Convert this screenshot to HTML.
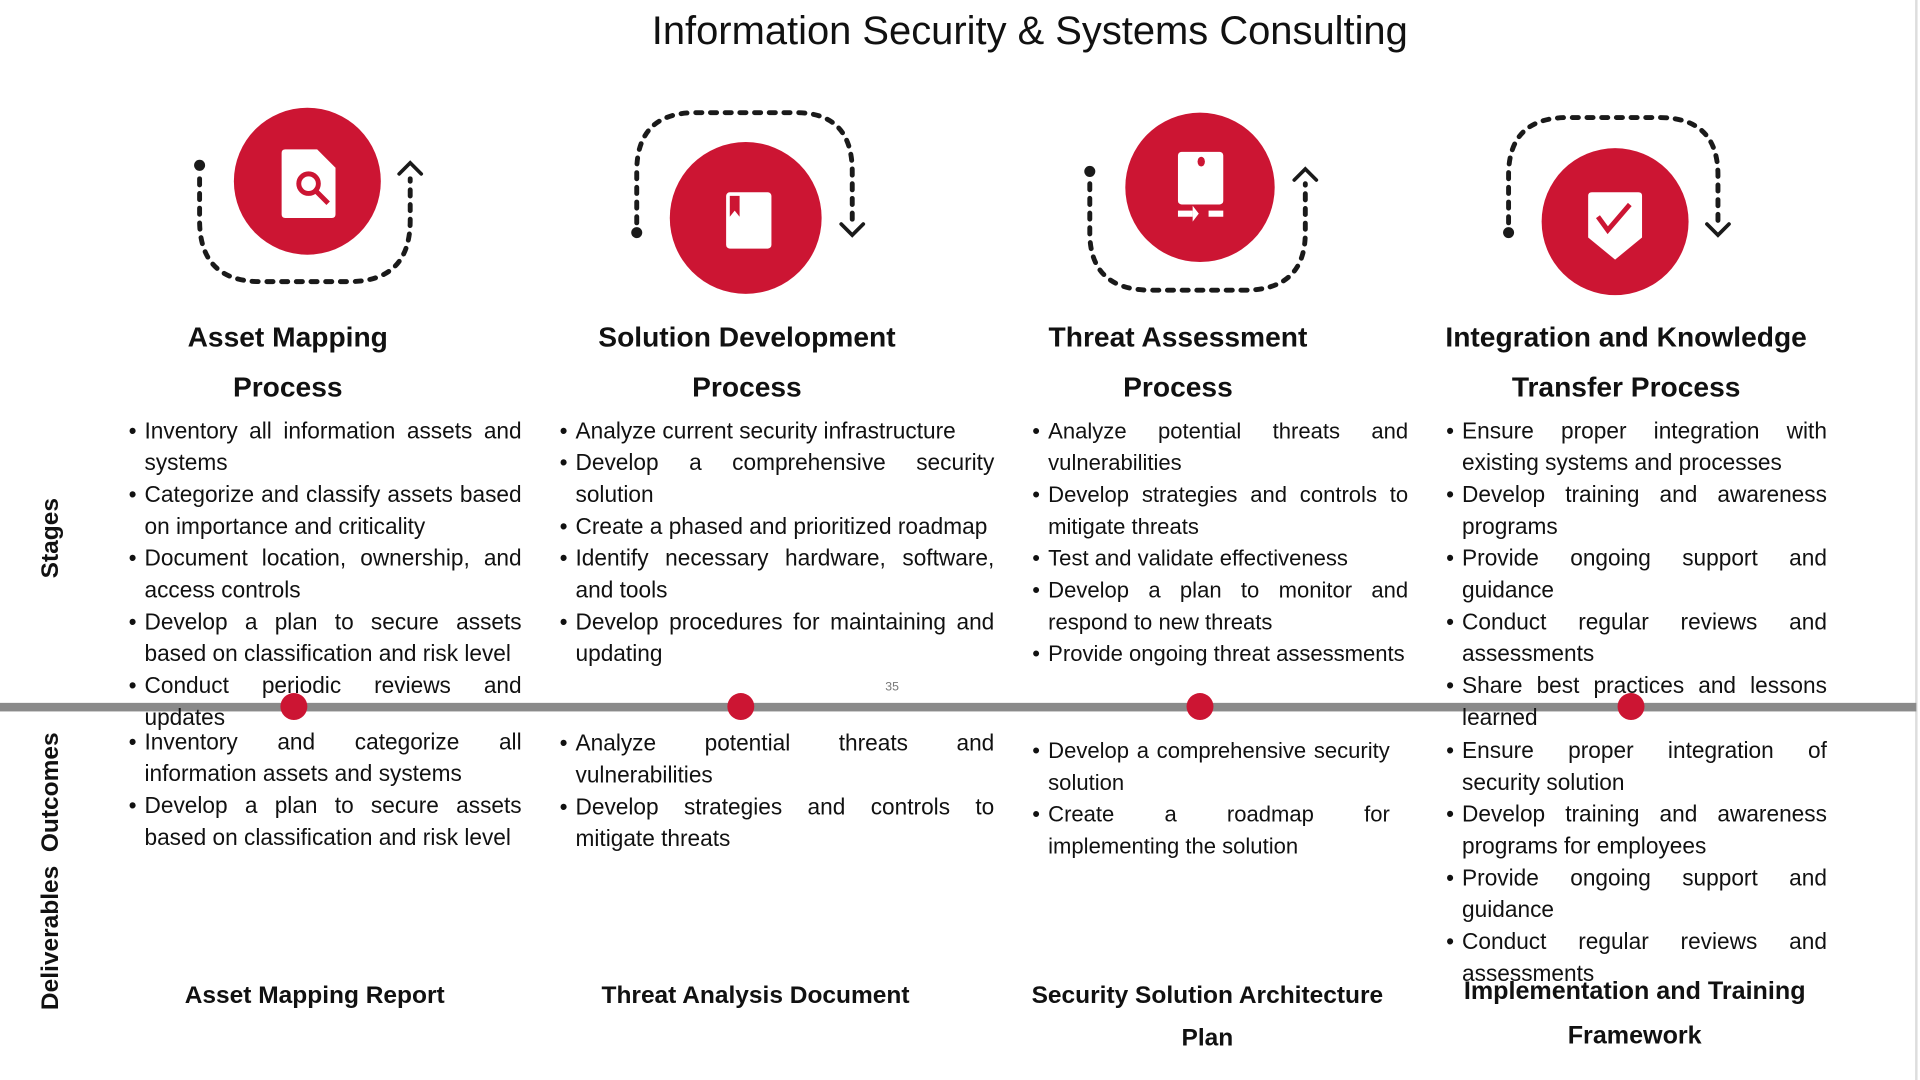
<!DOCTYPE html>
<html><head><meta charset="utf-8"><style>
html,body{margin:0;padding:0;background:#fff;}
body{width:1920px;height:1080px;overflow:hidden;position:relative;}
#s{position:absolute;left:0;top:0;width:1568px;height:882px;transform:scale(1.22449);transform-origin:0 0;font-family:"Liberation Sans",sans-serif;color:#111;}
.a{position:absolute;}
.t{font-size:32.6px;left:0;width:1682px;text-align:center;top:6px;}
.h{font-weight:bold;font-size:23px;text-align:center;line-height:41px;}
ul{position:absolute;margin:0;padding:0;list-style:none;font-size:18.5px;line-height:26px;}
ul.c3{font-size:18px;}
li{position:relative;padding-left:13px;text-align:justify;}
li:before{content:"•";position:absolute;left:0;top:0;}
.v{position:absolute;font-weight:bold;font-size:20px;transform:rotate(-90deg);transform-origin:center;white-space:nowrap;text-align:center;}
</style></head><body><div id="s">
<div class="a t">Information Security &amp; Systems Consulting</div>
<svg class="a" style="left:0;top:0" width="1568" height="882" viewBox="0 0 1568 882">
<line x1="1565" y1="0" x2="1565" y2="882" stroke="#ddd" stroke-width="2"/>
<rect x="0" y="574" width="1565" height="7" fill="#8a8a8a"/>
<g fill="#cc1533"><circle cx="240" cy="577" r="11"/><circle cx="605" cy="577" r="11"/><circle cx="980" cy="577" r="11"/><circle cx="1332" cy="577" r="11"/></g>
<g fill="none" stroke="#1a1a1a" stroke-width="4" stroke-linecap="round" stroke-dasharray="5 7">
<path d="M163,146 L163,180 Q163,230 213,230 L285,230 Q335,230 335,180 L335,146"/>
<path d="M520,182 L520,140 Q520,92 568,92 L650,92 Q696,92 696,140 L696,180"/>
<path d="M890,150 L890,190 Q890,237 940,237 L1016,237 Q1066,237 1066,190 L1066,150"/>
<path d="M1232,182 L1232,143 Q1232,96 1280,96 L1355,96 Q1403,96 1403,143 L1403,180"/>
</g>
<g fill="none" stroke="#1a1a1a" stroke-width="3" stroke-linecap="round">
<polyline points="326,142 335,133 344,142"/><polyline points="687,183 696,192 705,183"/>
<polyline points="1057,147 1066,138 1075,147"/><polyline points="1394,183 1403,192 1412,183"/>
</g>
<g fill="#1a1a1a"><circle cx="163" cy="135" r="4.5"/><circle cx="520" cy="190" r="4.5"/><circle cx="890" cy="140" r="4.5"/><circle cx="1232" cy="190" r="4.5"/></g>
<g fill="#cc1533"><circle cx="251" cy="148" r="60"/><circle cx="609" cy="178" r="62"/><circle cx="980" cy="153" r="61"/><circle cx="1319" cy="181" r="60"/></g>
<path d="M233,122 h26 l15,15 v38 q0,3 -3,3 h-38 q-3,0 -3,-3 v-50 q0,-3 3,-3z" fill="#fff"/>
<circle cx="252" cy="150" r="8" fill="none" stroke="#cc1533" stroke-width="4"/>
<line x1="258" y1="156" x2="268" y2="166" stroke="#cc1533" stroke-width="4"/>
<rect x="593" y="157" width="37" height="46" rx="3" fill="#fff"/>
<path d="M596,160 h8 v17 l-4,-5 l-4,5z" fill="#cc1533"/>
<rect x="962" y="124" width="37" height="43" rx="3" fill="#fff"/>
<ellipse cx="981" cy="132" rx="3" ry="4" fill="#cc1533"/>
<rect x="962" y="172" width="12" height="5" fill="#fff"/><path d="M974,168 l5,6.5 l-5,6.5z" fill="#fff"/><rect x="987" y="172" width="12" height="5" fill="#fff"/>
<path d="M1300,157 h38 q3,0 3,3 v34 l-22,18 l-22,-18 v-34 q0,-3 3,-3z" fill="#fff"/>
<polyline points="1305,177 1313,188 1331,167" fill="none" stroke="#cc1533" stroke-width="4"/>
</svg>
<div class="a" style="left:723px;top:556px;font-size:10px;color:#777">35</div>
<div class="v" style="left:-8px;top:428px;width:100px">Stages</div>
<div class="v" style="left:-78px;top:700px;width:240px">Deliverables &nbsp;Outcomes</div>

<div class="a h" style="left:85px;width:300px;top:255px">Asset Mapping<br>Process</div>
<div class="a h" style="left:440px;width:340px;top:255px">Solution Development<br>Process</div>
<div class="a h" style="left:812px;width:300px;top:255px">Threat Assessment<br>Process</div>
<div class="a h" style="left:1148px;width:360px;top:255px">Integration and Knowledge<br>Transfer Process</div>

<ul style="left:105px;width:321px;top:339px">
<li>Inventory all information assets and systems</li>
<li>Categorize and classify assets based on importance and criticality</li>
<li>Document location, ownership, and access controls</li>
<li>Develop a plan to secure assets based on classification and risk level</li>
<li>Conduct periodic reviews and updates</li></ul>
<ul style="left:457px;width:355px;top:339px">
<li>Analyze current security infrastructure</li>
<li>Develop a comprehensive security solution</li>
<li>Create a phased and prioritized roadmap</li>
<li>Identify necessary hardware, software, and tools</li>
<li>Develop procedures for maintaining and updating</li></ul>
<ul class="c3" style="left:843px;width:307px;top:339px">
<li>Analyze potential threats and vulnerabilities</li>
<li>Develop strategies and controls to mitigate threats</li>
<li>Test and validate effectiveness</li>
<li>Develop a plan to monitor and respond to new threats</li>
<li>Provide ongoing threat assessments</li></ul>
<ul style="left:1181px;width:311px;top:339px">
<li>Ensure proper integration with existing systems and processes</li>
<li>Develop training and awareness programs</li>
<li>Provide ongoing support and guidance</li>
<li>Conduct regular reviews and assessments</li>
<li>Share best practices and lessons learned</li></ul>

<ul style="left:105px;width:321px;top:593px">
<li>Inventory and categorize all information assets and systems</li>
<li>Develop a plan to secure assets based on classification and risk level</li></ul>
<ul style="left:457px;width:355px;top:594px">
<li>Analyze potential threats and vulnerabilities</li>
<li>Develop strategies and controls to mitigate threats</li></ul>
<ul class="c3" style="left:843px;width:292px;top:600px">
<li>Develop a comprehensive security solution</li>
<li>Create a roadmap for implementing the solution</li></ul>
<ul style="left:1181px;width:311px;top:600px">
<li>Ensure proper integration of security solution</li>
<li>Develop training and awareness programs for employees</li>
<li>Provide ongoing support and guidance</li>
<li>Conduct regular reviews and assessments</li></ul>

<div class="a h" style="left:100px;width:314px;top:796px;font-size:20px;line-height:35px">Asset Mapping Report</div>
<div class="a h" style="left:450px;width:334px;top:796px;font-size:20px;line-height:35px">Threat Analysis Document</div>
<div class="a h" style="left:820px;width:332px;top:796px;font-size:20px;line-height:35px">Security Solution Architecture<br>Plan</div>
<div class="a h" style="left:1165px;width:340px;top:792px;font-size:20.5px;line-height:36px">Implementation and Training<br>Framework</div>
</div></body></html>
